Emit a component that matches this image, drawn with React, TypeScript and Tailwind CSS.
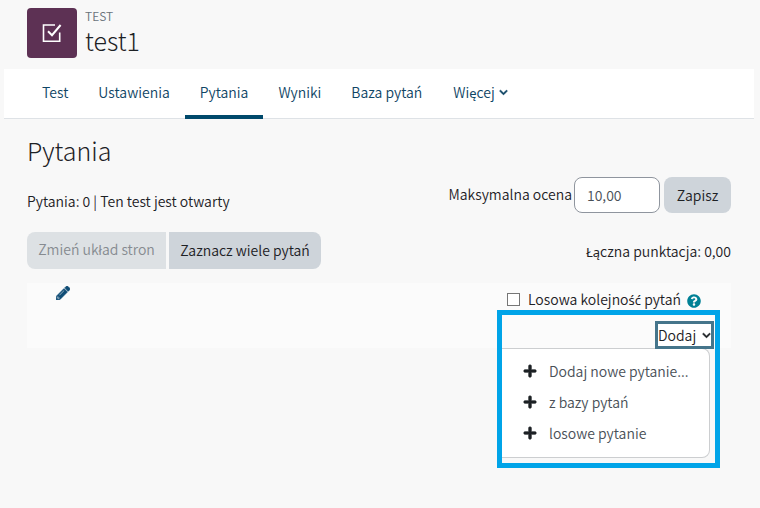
import { FaChevronDown, FaPencilAlt, FaPlus, FaQuestionCircle } from "react-icons/fa";

const tabs = ["Test", "Ustawienia", "Pytania", "Wyniki", "Baza pytań"];
const addOptions = ["Dodaj nowe pytanie...", "z bazy pytań", "losowe pytanie"];

// Polish letters that the main font lacks are set in Noto Sans at regular weight.
function Polish({ text }: { text: string }) {
  return (
    <span>
      {text.split(/([ŁłąęśćŚĆ]+)/).map((part, i) =>
        i % 2 === 1 ? (
          <span key={i} className="font-['Noto_Sans',sans-serif] text-[13px] font-normal">
            {part}
          </span>
        ) : (
          part
        ),
      )}
    </span>
  );
}

function ActivityHeader() {
  return (
    <header className="flex gap-2 pt-2 pl-[27px]">
      <div className="flex size-[50px] items-center justify-center rounded bg-[#5d3154]">
        <svg viewBox="0 0 20 20" className="size-5" fill="none" stroke="#fff" strokeWidth="1.6" aria-hidden="true">
          <path d="M13 2H1.5v16.2h16.2V9.5" />
          <path d="M6 8.2l4 4L18.6 2" strokeWidth="2" />
        </svg>
      </div>
      <div>
        <div className="text-[12px] leading-4 text-[#6a737b]">TEST</div>
        <h1 className="text-[25px] leading-8 font-light text-[#1d2125]">test1</h1>
      </div>
    </header>
  );
}

function TabBar() {
  return (
    <nav className="mx-1 mt-[11px] mr-1.5 flex h-[50px] border-b border-[#dee2e6] bg-white pl-[23px] text-[#0f4565]">
      {tabs.map((tab) => (
        <a
          key={tab}
          href="#"
          className={
            tab === "Pytania"
              ? "-mb-px border-b-4 border-[#00496b] px-[15px] pt-[11px]"
              : "px-[15px] pt-[11px]"
          }
        >
          {tab}
        </a>
      ))}
      <button type="button" className="flex items-center gap-1 self-start px-4 pt-[11px]">
        <Polish text="Więcej" />
        <FaChevronDown className="size-[9px] stroke-current stroke-[30px]" />
      </button>
    </nav>
  );
}

function AddMenu() {
  return (
    <div className="absolute top-[27px] right-[11px] w-[223px] border-5 border-[#00a4e8] pb-[5px]">
      <div className="flex justify-end pt-1.5 pr-px">
        <button
          type="button"
          className="flex h-7 w-[59px] items-center justify-between border-3 border-[#45758b] bg-white text-[#1d2125]"
        >
          Dodaj
          <FaChevronDown className="size-[9px] stroke-current stroke-[30px]" />
        </button>
      </div>
      <ul className="-mt-px mr-[5px] h-[110px] rounded-r-lg border border-l-0 border-[#ccced0] bg-white pt-1.5">
        {addOptions.map((option) => (
          <li key={option}>
            <a href="#" className="flex h-[31px] items-center gap-3 pl-[21px] text-[#495057]">
              <FaPlus className="size-3.5 stroke-current stroke-[24px] text-[#1d2125]" />
              {option}
            </a>
          </li>
        ))}
      </ul>
    </div>
  );
}

export default function App() {
  return (
    <div className="min-h-screen bg-[#f8f8f8] font-['Noto_Sans_CJK_SC','Noto_Sans',sans-serif] text-[14px] leading-6 font-[350] text-[#1d2125]">
      <ActivityHeader />
      <TabBar />
      <main className="pr-[29px] pl-[27px]">
        <h2 className="pt-[15px] text-[25px] leading-8 font-light">Pytania</h2>
        <div className="mt-[11px] flex justify-between">
          <p className="pt-3">Pytania: 0 | Ten test jest otwarty</p>
          <form className="flex h-9 items-center">
            <label htmlFor="grade" className="pb-0.5">Maksymalna ocena</label>
            <input
              id="grade"
              defaultValue="10,00"
              className="ml-0.5 h-9 w-[86px] rounded-lg border border-[#8f959e] bg-white px-3 text-[#495057]"
            />
            <button type="button" className="ml-1 h-9 w-[67px] rounded-lg bg-[#ced4da]">
              Zapisz
            </button>
          </form>
        </div>
        <div className="mt-[19px] flex items-center justify-between">
          <div className="flex gap-[3px]">
            <button type="button" disabled className="h-[37px] w-[139px] rounded-l-lg bg-[#dde1e4] pb-0.5 text-[#868b90]">
              <Polish text="Zmień układ stron" />
            </button>
            <button type="button" className="h-[37px] w-[152px] rounded-r-lg bg-[#ced4da] pb-0.5">
              Zaznacz wiele pytań
            </button>
          </div>
          <p className="pt-0.5">
            <Polish text="Łączna punktacja: 0,00" />
          </p>
        </div>
        <section className="relative mt-3.5 flex h-[65px] items-start justify-between bg-[#fbfbfb] pr-[30px] pl-[29px]">
          <button type="button" aria-label="Edytuj" className="pt-[3px] text-[#0f4c75]">
            <FaPencilAlt className="size-3.5 stroke-current stroke-[20px]" />
          </button>
          <div className="flex items-center pt-1">
            <input
              id="shuffle"
              type="checkbox"
              className="mr-2 size-[13px] appearance-none border border-[#767676] bg-white"
            />
            <label htmlFor="shuffle">
              <Polish text="Losowa kolejność pytań" />
            </label>
            <FaQuestionCircle className="mt-0.5 ml-1.5 size-3.5 text-[#008196]" />
          </div>
          <AddMenu />
        </section>
      </main>
    </div>
  );
}
